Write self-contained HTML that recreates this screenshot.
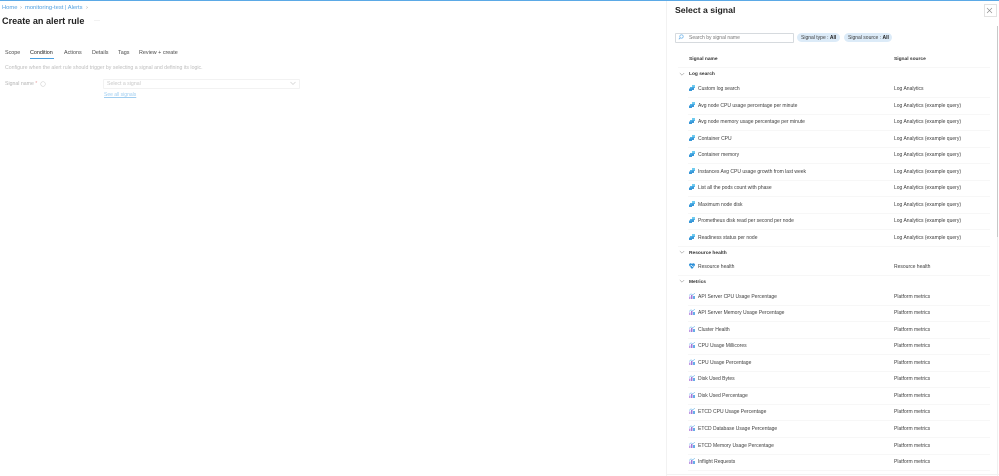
<!DOCTYPE html>
<html><head><meta charset="utf-8">
<style>
html,body{margin:0;padding:0;width:999px;height:476px;overflow:hidden;background:#fff;font-family:"Liberation Sans",sans-serif;}
#w{position:absolute;left:0;top:0;width:999px;height:476px;background:#fff;filter:blur(.3px);}
.a{position:absolute;white-space:nowrap;line-height:1;}
.t{font-size:5px;color:#3c3c3c;}
.b{font-size:4.850px;color:#333;font-weight:bold;}
.tab{position:absolute;top:50.500px;font-size:5.400px;color:#4a4a4a;white-space:nowrap;line-height:1;}
.r{position:absolute;left:0;width:999px;height:16px;}
.r svg{position:absolute;left:689px;top:0;}
.r .n{position:absolute;left:698px;top:2px;font-size:5px;line-height:1;color:#3c3c3c;white-space:nowrap;}
.r .s{position:absolute;left:894px;top:2px;font-size:5px;line-height:1;color:#3c3c3c;white-space:nowrap;}
.r i{position:absolute;left:688px;width:302px;top:12px;height:1px;background:#f7f7f7;}
</style></head><body><div id="w">
<div style="position:absolute;left:0;top:0;width:999px;height:1px;background:#5ba9e6"></div>

<div class="a" style="left:2px;top:6px;font-size:5.800px;color:#4f9fe0">Home</div>
<div class="a" style="left:20px;top:6px;font-size:5.800px;color:#999">&rsaquo;</div>
<div class="a" style="left:25px;top:6px;font-size:5.800px;color:#4f9fe0">monitoring-test | Alerts</div>
<div class="a" style="left:86px;top:6px;font-size:5.800px;color:#999">&rsaquo;</div>
<div class="a" style="left:2px;top:16.500px;font-size:9.100px;color:#222;font-weight:bold">Create an alert rule</div>
<div class="a" style="left:94px;top:18px;font-size:6px;color:#bbb">&middot;&middot;&middot;</div>

<div class="tab" style="left:5px">Scope</div>
<div class="tab" style="left:30px;color:#222">Condition</div>
<div style="position:absolute;left:30px;top:58px;width:24px;height:1px;background:#4a9fe0"></div>
<div class="tab" style="left:64px">Actions</div>
<div class="tab" style="left:92px">Details</div>
<div class="tab" style="left:118px">Tags</div>
<div class="tab" style="left:139px">Review + create</div>
<div class="a" style="left:5px;top:66px;font-size:5.200px;color:#bdbdbd">Configure when the alert rule should trigger by selecting a signal and defining its logic.</div>
<div class="a" style="left:5px;top:82px;font-size:5.200px;color:#b5b5b5">Signal name <span style="color:#e8a0a0">*</span></div>
<svg style="position:absolute;left:40px;top:81px" width="6" height="6"><circle cx="3" cy="3" r="2.300" fill="none" stroke="#d4d4d4" stroke-width=".6"/></svg>
<div style="position:absolute;left:103px;top:79px;width:195px;height:8px;border:.5px solid #f2f2f2;border-radius:1px"></div>
<div class="a" style="left:107px;top:82px;font-size:5.200px;color:#c8c8c8">Select a signal</div>
<svg style="position:absolute;left:290px;top:81px" width="6" height="5"><path d="M.5 1L3 3.500L5.500 1" fill="none" stroke="#ccc" stroke-width=".6"/></svg>
<div class="a" style="left:104px;top:93px;font-size:5px;color:#9fcdf0;text-decoration:underline">See all signals</div>

<div style="position:absolute;left:666px;top:1px;width:1px;height:475px;background:#f2f2f2"></div>
<div class="a" style="left:675px;top:5.500px;font-size:8.700px;color:#222;font-weight:bold">Select a signal</div>
<div style="position:absolute;left:983.500px;top:4px;width:11px;height:11px;border:1px solid #e2e2e2"></div>
<svg style="position:absolute;left:985px;top:5.500px" width="9" height="9"><path d="M2 2L7 7M7 2L2 7" stroke="#888" stroke-width=".6"/></svg>

<div style="position:absolute;left:675px;top:32.500px;width:117px;height:8px;border:.6px solid #d6dade;border-radius:1px"></div>
<svg style="position:absolute;left:678px;top:33.500px" width="6" height="6"><circle cx="3.500" cy="2.500" r="1.700" fill="none" stroke="#5ba9e6" stroke-width=".6"/><path d="M2.300 3.700L.8 5.200" stroke="#5ba9e6" stroke-width=".7"/></svg>
<div class="a" style="left:689px;top:36px;font-size:5px;color:#777">Search by signal name</div>
<div style="position:absolute;left:797px;top:32.500px;width:43px;height:9px;background:#dcebf8;border-radius:5px"></div>
<div class="a t" style="left:801px;top:36px">Signal type : <b style="color:#222">All</b></div>
<div style="position:absolute;left:844px;top:32.500px;width:48px;height:9px;background:#dcebf8;border-radius:5px"></div>
<div class="a t" style="left:848px;top:36px">Signal source : <b style="color:#222">All</b></div>

<div class="a b" style="left:689px;top:57.500px;color:#333">Signal name</div>
<div class="a b" style="left:894px;top:57.500px;color:#333">Signal source</div>
<div style="position:absolute;left:678px;top:67px;width:312px;height:1px;background:#f7f7f7"></div>

<svg style="position:absolute;left:679px;top:71.500px" width="6" height="5"><path d="M.8 1L3 3.200L5.200 1" fill="none" stroke="#777" stroke-width=".5"/></svg>
<div class="a b" style="left:689px;top:73px">Log search</div>
<svg style="position:absolute;left:679px;top:250px" width="6" height="5"><path d="M.8 1L3 3.200L5.200 1" fill="none" stroke="#777" stroke-width=".5"/></svg>
<div class="a b" style="left:689px;top:251.500px">Resource health</div>
<svg style="position:absolute;left:679px;top:279px" width="6" height="5"><path d="M.8 1L3 3.200L5.200 1" fill="none" stroke="#777" stroke-width=".5"/></svg>
<div class="a b" style="left:689px;top:280.500px">Metrics</div>

<svg width="0" height="0" style="position:absolute"><defs>
<g id="la"><path d="M3 0H6V3H3V4.500H1V2H3Z" fill="#4fb4ea"/><path d="M3 6H0V3.500H3V2.500H5V5H3Z" fill="#3a98d8"/><rect x="3" y="0" width="3" height="2" fill="#70ccf0"/></g>
<g id="rh"><path d="M3 6L.2 2.800C-.4 1.500.4 .2 1.600 .2C2.300 .2 2.800 .6 3 1C3.200 .6 3.700 .2 4.400 .2C5.600 .2 6.400 1.500 5.800 2.800Z" fill="#2b8fd8"/><path d="M.5 3H2L2.600 2L3.400 4L4 3H5.500" fill="none" stroke="#fff" stroke-width=".5"/></g>
<g id="m"><rect x="0" y="3.500" width="1.500" height="2.500" fill="#c09ce4"/><rect x="2" y="2" width="1.500" height="4" fill="#a278d8"/><rect x="4" y="3" width="2" height="3" fill="#66aee8"/><path d="M0 2.500L2 .8L4 1.800L6 0" fill="none" stroke="#78bcec" stroke-width=".6"/></g>
</defs></svg>

<div class="r" style="top:85px"><svg width="6" height="6"><use href="#la"/></svg><div class="n">Custom log search</div><div class="s">Log Analytics</div><i></i></div>
<div class="r" style="top:101.500px"><svg width="6" height="6"><use href="#la"/></svg><div class="n">Avg node CPU usage percentage per minute</div><div class="s">Log Analytics (example query)</div><i></i></div>
<div class="r" style="top:118px"><svg width="6" height="6"><use href="#la"/></svg><div class="n">Avg node memory usage percentage per minute</div><div class="s">Log Analytics (example query)</div><i></i></div>
<div class="r" style="top:134.500px"><svg width="6" height="6"><use href="#la"/></svg><div class="n">Container CPU</div><div class="s">Log Analytics (example query)</div><i></i></div>
<div class="r" style="top:151px"><svg width="6" height="6"><use href="#la"/></svg><div class="n">Container memory</div><div class="s">Log Analytics (example query)</div><i></i></div>
<div class="r" style="top:167.500px"><svg width="6" height="6"><use href="#la"/></svg><div class="n">Instances Avg CPU usage growth from last week</div><div class="s">Log Analytics (example query)</div><i></i></div>
<div class="r" style="top:184px"><svg width="6" height="6"><use href="#la"/></svg><div class="n">List all the pods count with phase</div><div class="s">Log Analytics (example query)</div><i></i></div>
<div class="r" style="top:200.500px"><svg width="6" height="6"><use href="#la"/></svg><div class="n">Maximum node disk</div><div class="s">Log Analytics (example query)</div><i></i></div>
<div class="r" style="top:217px"><svg width="6" height="6"><use href="#la"/></svg><div class="n">Prometheus disk read per second per node</div><div class="s">Log Analytics (example query)</div><i></i></div>
<div class="r" style="top:234px"><svg width="6" height="6"><use href="#la"/></svg><div class="n">Readiness status per node</div><div class="s">Log Analytics (example query)</div><i style="left:678px;width:312px"></i></div>

<div class="r" style="top:263px"><svg width="6" height="6"><use href="#rh"/></svg><div class="n">Resource health</div><div class="s">Resource health</div><i style="left:678px;width:312px"></i></div>

<div class="r" style="top:292.500px"><svg width="6" height="6"><use href="#m"/></svg><div class="n">API Server CPU Usage Percentage</div><div class="s">Platform metrics</div><i></i></div>
<div class="r" style="top:309px"><svg width="6" height="6"><use href="#m"/></svg><div class="n">API Server Memory Usage Percentage</div><div class="s">Platform metrics</div><i></i></div>
<div class="r" style="top:325.500px"><svg width="6" height="6"><use href="#m"/></svg><div class="n">Cluster Health</div><div class="s">Platform metrics</div><i></i></div>
<div class="r" style="top:342px"><svg width="6" height="6"><use href="#m"/></svg><div class="n">CPU Usage Millicores</div><div class="s">Platform metrics</div><i></i></div>
<div class="r" style="top:358.500px"><svg width="6" height="6"><use href="#m"/></svg><div class="n">CPU Usage Percentage</div><div class="s">Platform metrics</div><i></i></div>
<div class="r" style="top:375px"><svg width="6" height="6"><use href="#m"/></svg><div class="n">Disk Used Bytes</div><div class="s">Platform metrics</div><i></i></div>
<div class="r" style="top:392px"><svg width="6" height="6"><use href="#m"/></svg><div class="n">Disk Used Percentage</div><div class="s">Platform metrics</div><i></i></div>
<div class="r" style="top:408px"><svg width="6" height="6"><use href="#m"/></svg><div class="n">ETCD CPU Usage Percentage</div><div class="s">Platform metrics</div><i></i></div>
<div class="r" style="top:425px"><svg width="6" height="6"><use href="#m"/></svg><div class="n">ETCD Database Usage Percentage</div><div class="s">Platform metrics</div><i></i></div>
<div class="r" style="top:441.500px"><svg width="6" height="6"><use href="#m"/></svg><div class="n">ETCD Memory Usage Percentage</div><div class="s">Platform metrics</div><i></i></div>
<div class="r" style="top:458px"><svg width="6" height="6"><use href="#m"/></svg><div class="n">Inflight Requests</div><div class="s">Platform metrics</div><i></i></div>

<div style="position:absolute;left:997px;top:26px;width:1px;height:450px;background:#f0f0f0"></div>
<div style="position:absolute;left:997px;top:26px;width:1px;height:211px;background:#c8c8c8"></div>
<div style="position:absolute;left:667px;top:474px;width:332px;height:1px;background:#f2f2f2"></div>
</div></body></html>
